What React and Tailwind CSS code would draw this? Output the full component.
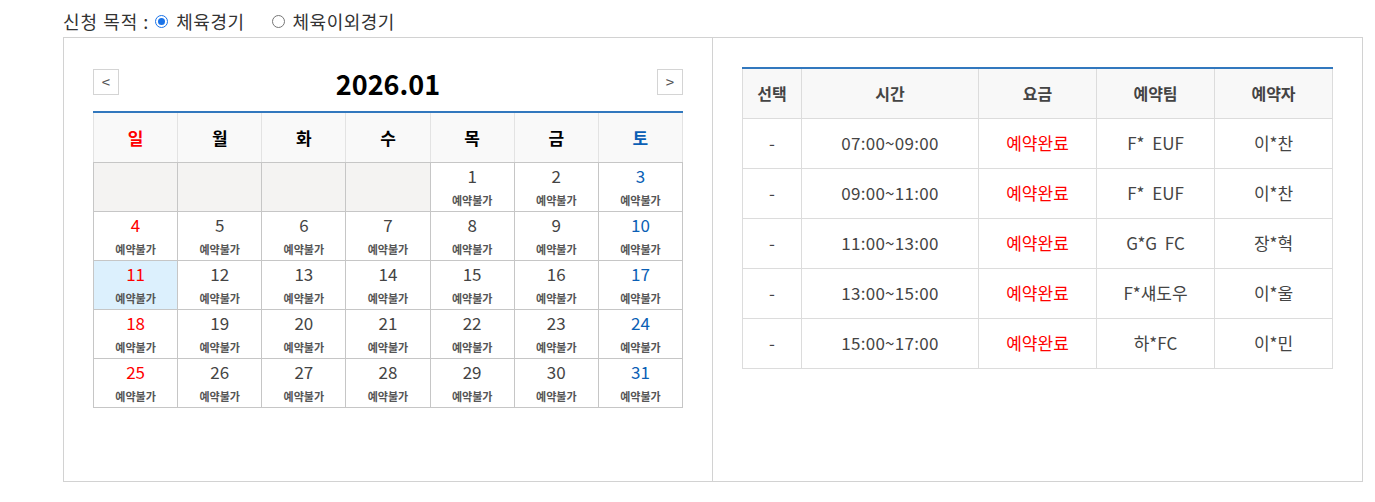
const days = ["일", "월", "화", "수", "목", "금", "토"];

const weeks = [
  [null, null, null, null, 1, 2, 3],
  [4, 5, 6, 7, 8, 9, 10],
  [11, 12, 13, 14, 15, 16, 17],
  [18, 19, 20, 21, 22, 23, 24],
  [25, 26, 27, 28, 29, 30, 31],
];

const bookings = [
  { time: "07:00~09:00", team: "F*  EUF", name: "이*찬" },
  { time: "09:00~11:00", team: "F*  EUF", name: "이*찬" },
  { time: "11:00~13:00", team: "G*G  FC", name: "장*혁" },
  { time: "13:00~15:00", team: "F*섀도우", name: "이*울" },
  { time: "15:00~17:00", team: "하*FC", name: "이*민" },
];

function dayColor(i) {
  if (i === 0) return "text-[#ff0000]";
  if (i === 6) return "text-[#0b5fb5]";
  return "text-[#444]";
}

function Radio({ checked, label }) {
  return (
    <label className="flex items-center gap-[8px]">
      <span
        className={
          "flex h-[13px] w-[13px] items-center justify-center rounded-full border " +
          (checked ? "border-[#1a73e8]" : "border-[#767676]")
        }
      >
        {checked && <span className="h-[7px] w-[7px] rounded-full bg-[#1a73e8]" />}
      </span>
      <span className="tracking-[0.5px]">{label}</span>
    </label>
  );
}

function Calendar() {
  return (
    <div className="w-[590px]">
      <div className="flex h-[42px] items-start justify-between">
        <button className="flex h-[26px] w-[26px] items-center justify-center border border-[#d4d4d4] bg-white text-[15px] text-[#555]">
          &lt;
        </button>
        <div className="mt-[-5px] text-[27px] font-bold text-black">2026.01</div>
        <button className="flex h-[26px] w-[26px] items-center justify-center border border-[#d4d4d4] bg-white text-[15px] text-[#555]">
          &gt;
        </button>
      </div>
      <table className="w-full table-fixed border-collapse border-t-2 border-t-[#3278be]">
        <thead>
          <tr className="h-[50px] bg-[#f9f9f9]">
            {days.map((d, i) => (
              <th
                key={d}
                className={
                  "border-x border-b border-x-[#e3e3e3] border-b-[#c6c6c6] text-[17px] font-bold " +
                  (i === 0 ? "text-[#ff0000]" : i === 6 ? "text-[#0b5fb5]" : "text-black")
                }
              >
                {d}
              </th>
            ))}
          </tr>
        </thead>
        <tbody>
          {weeks.map((w, wi) => (
            <tr key={wi} className="h-[49px]">
              {w.map((n, i) =>
                n === null ? (
                  <td key={i} className="border border-[#c6c6c6] bg-[#f4f3f2]" />
                ) : (
                  <td
                    key={i}
                    className={
                      "border border-[#c6c6c6] text-center align-top " +
                      (n === 11 ? "bg-[#dcf0fd]" : "bg-white")
                    }
                  >
                    <div className={"mt-[2px] text-[17px] leading-[22px] " + dayColor(i)}>{n}</div>
                    <div className="mt-[5px] text-[11px] font-bold leading-[16px] text-[#555]">예약불가</div>
                  </td>
                )
              )}
            </tr>
          ))}
        </tbody>
      </table>
    </div>
  );
}

function Bookings() {
  return (
    <table className="w-[590px] table-fixed border-collapse border-t-2 border-t-[#3278be]">
      <colgroup>
        <col className="w-[59px]" />
        <col className="w-[177px]" />
        <col className="w-[118px]" />
        <col className="w-[118px]" />
        <col className="w-[118px]" />
      </colgroup>
      <thead>
        <tr className="h-[50px] bg-[#f8f8f8]">
          {["선택", "시간", "요금", "예약팀", "예약자"].map((h) => (
            <th key={h} className="border border-t-0 border-[#dcdcdc] text-[16px] font-bold text-[#444]">
              {h}
            </th>
          ))}
        </tr>
      </thead>
      <tbody>
        {bookings.map((b) => (
          <tr key={b.time} className="h-[50px] text-center text-[17px] text-[#444]">
            <td className="border border-[#dcdcdc]">-</td>
            <td className="border border-[#dcdcdc] tracking-[0.3px]">{b.time}</td>
            <td className="border border-[#dcdcdc] text-[#ff0000]">예약완료</td>
            <td className="whitespace-pre border border-[#dcdcdc]">{b.team}</td>
            <td className="border border-[#dcdcdc]">{b.name}</td>
          </tr>
        ))}
      </tbody>
    </table>
  );
}

export default function App() {
  return (
    <div
      className="min-h-[502px] bg-white pl-[63px] text-[#333]"
      style={{ fontFamily: '"Noto Sans CJK KR", "Noto Sans", sans-serif' }}
    >
      <div className="flex h-[37px] items-center pt-[6px] text-[18px] text-[#333]">
        <span className="mr-[6px] tracking-[1px]">신청 목적 :</span>
        <Radio checked label="체육경기" />
        <span className="w-[27px]" />
        <Radio label="체육이외경기" />
      </div>
      <div className="flex h-[445px] w-[1300px] border border-[#d2d2d2]">
        <div className="w-[649px] border-r border-[#d2d2d2] pl-[29px] pt-[31px]">
          <Calendar />
        </div>
        <div className="flex-1 pl-[29px] pt-[29px]">
          <Bookings />
        </div>
      </div>
    </div>
  );
}
